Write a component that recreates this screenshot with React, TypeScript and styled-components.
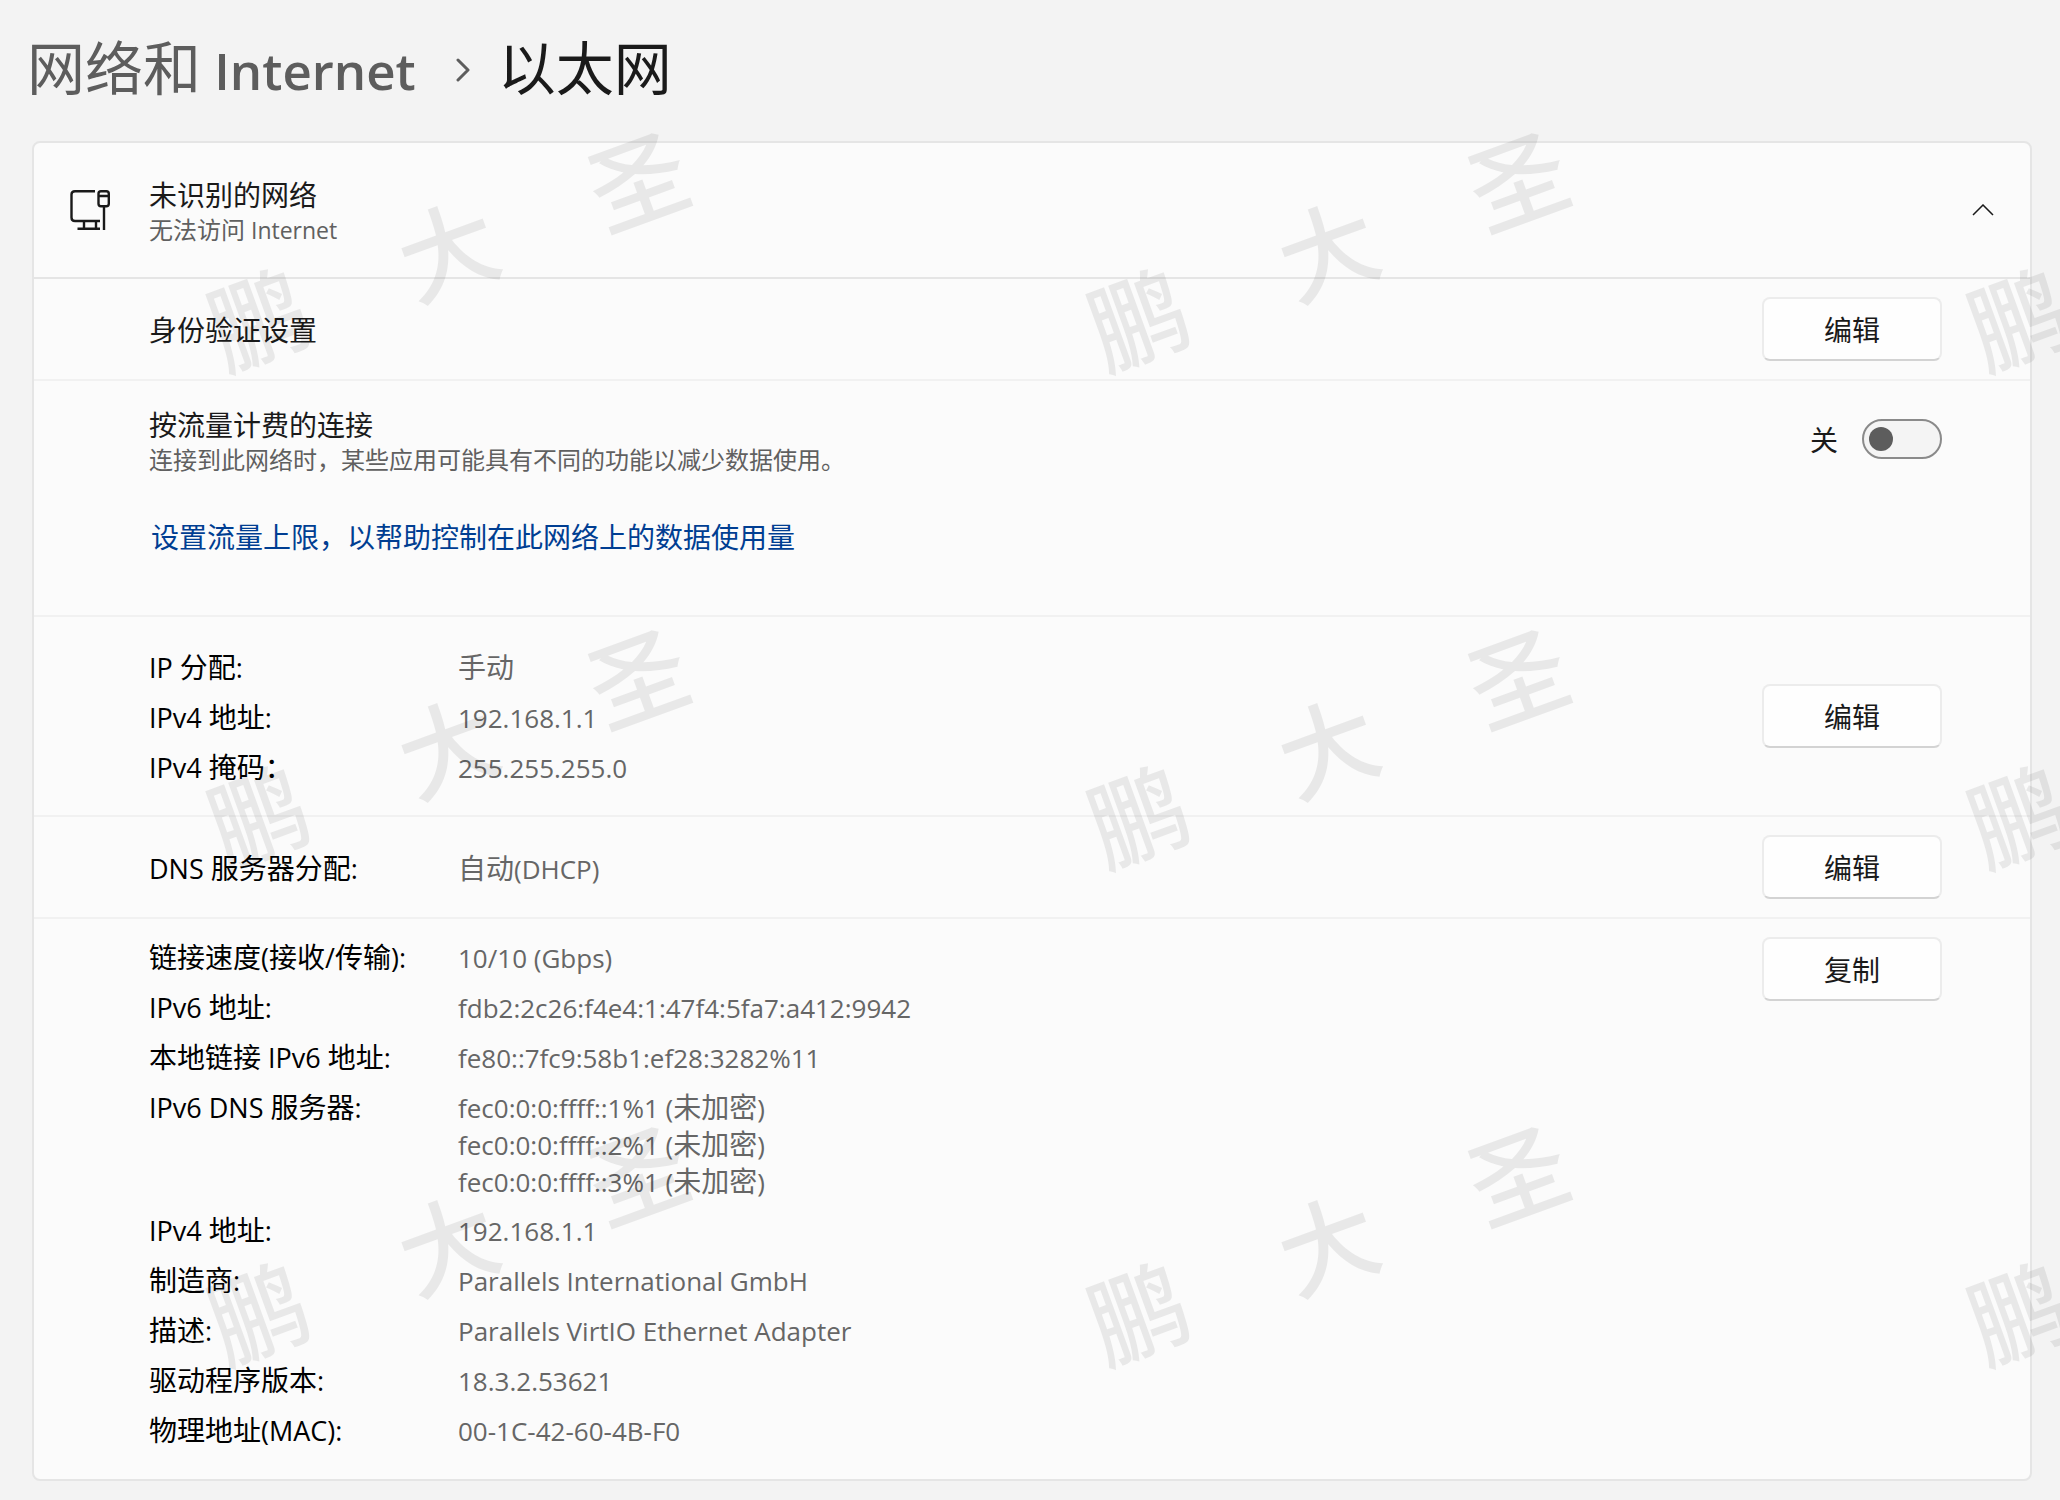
import React, { useState } from "react";
import styled, { createGlobalStyle } from "styled-components";

const GlobalStyle = createGlobalStyle`
  *, *::before, *::after { box-sizing: border-box; }
  html, body { margin: 0; background: #f3f3f3; }
  body {
    font-family: "Noto Sans CJK SC", sans-serif;
    font-size: 28px;
    line-height: 38px;
    color: #1a1a1a;
  }
  h1, h2, h3, p, dl, dd, dt { margin: 0; font: inherit; }
`;

const Page = styled.div`
  position: relative;
  min-height: 100vh;
  padding: 27px 28px 19px 32px;
  overflow: hidden;
`;

const LatinRun = styled.span`
  font-family: "Open Sans", sans-serif;
  font-size: 26px;
  line-height: 1;
`;

function Mixed({ text }: { text: string }) {
  return (
    <>
      {text.split(/([ -~]+)/).map((part, i) =>
        i % 2 ? <LatinRun key={i}>{part}</LatinRun> : part
      )}
    </>
  );
}

const Breadcrumb = styled.nav`
  display: flex;
  align-items: center;
  height: 76px;
  margin-bottom: 38px;
  font-size: 58px;
  line-height: 76px;
`;

const CrumbLink = styled.a`
  margin-left: -5px;
  color: #5d5d5d;
  text-decoration: none;
  white-space: nowrap;

  ${LatinRun} {
    font-size: 51px;
    font-weight: 600;
  }
`;

const CrumbArrow = styled.svg`
  flex: none;
  width: 14px;
  height: 24px;
  margin: 10px 28px 0 40px;
`;

const Card = styled.main`
  border: 2px solid #e5e5e5;
  border-radius: 8px;
  background: #fbfbfb;
`;

const Header = styled.header`
  display: flex;
  align-items: center;
  height: 134px;
  padding: 0 36px;
`;

const DeviceIcon = styled.svg`
  flex: none;
  width: 40px;
  height: 40px;
  margin-right: 39px;
`;

const Grow = styled.div`
  flex: 1;
  min-width: 0;
`;

const Note = styled.p`
  font-size: 24px;
  line-height: 32px;
  color: #606060;

  ${LatinRun} { font-size: 23px; }
`;

const Collapse = styled.button`
  display: flex;
  align-items: center;
  justify-content: flex-end;
  width: 40px;
  height: 40px;
  padding: 0;
  border: 0;
  background: none;
`;

const Section = styled.section<{ $first?: boolean; $pad?: string; $align?: string }>`
  display: flex;
  align-items: ${(p) => p.$align ?? "center"};
  padding: ${(p) => p.$pad ?? "18px"} 88px ${(p) => p.$pad ?? "18px"} 115px;
  border-top: 2px solid ${(p) => (p.$first ? "#e5e5e5" : "#f1f1f1")};
`;

const MeteredSection = styled(Section)`
  padding-top: 24px;
  padding-bottom: 60px;
`;

const DetailsSection = styled(Section)`
  padding-bottom: 31px;
`;

const ActionButton = styled.button`
  flex: none;
  width: 180px;
  height: 64px;
  padding: 0;
  border: 2px solid #ececec;
  border-bottom-color: #d3d3d3;
  border-radius: 8px;
  background: #fefefe;
  color: #1a1a1a;
  font: inherit;
`;

const LimitLink = styled.a`
  display: inline-block;
  margin: 42px 0 0 2px;
  color: #003e92;
  text-decoration: none;
`;

const SwitchLabel = styled.label`
  display: flex;
  align-items: center;
  gap: 24px;
  margin-top: 14px;
`;

const Switch = styled.input`
  appearance: none;
  display: flex;
  align-items: center;
  width: 80px;
  height: 40px;
  margin: 0;
  padding: 0 5px;
  border: 2px solid #8a8a8a;
  border-radius: 20px;
  background: #f4f4f4;

  &::before {
    content: "";
    width: 24px;
    height: 24px;
    border-radius: 50%;
    background: #5d5d5d;
  }
  &:checked { justify-content: flex-end; }
`;

const Properties = styled.dl`
  flex: 1;
  display: grid;
  grid-template-columns: 309px 1fr;
  row-gap: 12px;

  dt { color: #000; }
  dt ${LatinRun} { font-size: 27px; }
  dd { color: #666; }
`;

const ValueLine = styled.div`
  height: 37px;
`;

type Row = [label: string, ...values: string[]];

function PropertyList({ rows }: { rows: Row[] }) {
  return (
    <Properties>
      {rows.map(([label, ...values]) => (
        <React.Fragment key={label}>
          <dt><Mixed text={label} /></dt>
          <dd>
            {values.map((v) => (
              <ValueLine key={v}><Mixed text={v} /></ValueLine>
            ))}
          </dd>
        </React.Fragment>
      ))}
    </Properties>
  );
}

const ipRows: Row[] = [
  ["IP 分配:", "手动"],
  ["IPv4 地址:", "192.168.1.1"],
  ["IPv4 掩码：", "255.255.255.0"],
];

const dnsRows: Row[] = [["DNS 服务器分配:", "自动(DHCP)"]];

const detailRows: Row[] = [
  ["链接速度(接收/传输):", "10/10 (Gbps)"],
  ["IPv6 地址:", "fdb2:2c26:f4e4:1:47f4:5fa7:a412:9942"],
  ["本地链接 IPv6 地址:", "fe80::7fc9:58b1:ef28:3282%11"],
  [
    "IPv6 DNS 服务器:",
    "fec0:0:0:ffff::1%1 (未加密)",
    "fec0:0:0:ffff::2%1 (未加密)",
    "fec0:0:0:ffff::3%1 (未加密)",
  ],
  ["IPv4 地址:", "192.168.1.1"],
  ["制造商:", "Parallels International GmbH"],
  ["描述:", "Parallels VirtIO Ethernet Adapter"],
  ["驱动程序版本:", "18.3.2.53621"],
  ["物理地址(MAC):", "00-1C-42-60-4B-F0"],
];

/* The watermark lies over the whole page and repeats on a fixed tile. */
const WatermarkLayer = styled.div`
  position: absolute;
  inset: -4px 0 0 0;
  display: grid;
  grid-template-columns: repeat(3, 880px);
  grid-auto-rows: 497px;
  padding-left: 6px;
  overflow: hidden;
  pointer-events: none;
`;

const WatermarkTile = styled.div`
  display: flex;
  align-items: center;
  justify-content: center;
  gap: 104px;
  transform: rotate(-20deg);
  font-size: 98px;
  font-weight: 500;
  line-height: 98px;
  color: rgba(0, 0, 0, 0.075);
`;

export default function App() {
  const [metered, setMetered] = useState(false);
  return (
    <Page lang="zh-CN">
      <GlobalStyle />
      <Breadcrumb>
        <CrumbLink href="#network"><Mixed text="网络和 Internet" /></CrumbLink>
        <CrumbArrow viewBox="0 0 14 24" fill="none" stroke="#5d5d5d" strokeWidth="3" aria-hidden="true">
          <path d="M2 2 L12 12 L2 22" strokeLinecap="round" strokeLinejoin="round" />
        </CrumbArrow>
        <h1>以太网</h1>
      </Breadcrumb>

      <Card>
        <Header>
          <DeviceIcon viewBox="0 0 40 40" fill="none" stroke="#1a1a1a" strokeWidth="2.400" aria-hidden="true">
            <path d="M25 1.200H5Q1.500 1.200 1.500 4.500V27.500Q1.500 31 5 31H30M14 31V39M26 31V39M7.500 38.800H30" />
            <rect x="28.500" y="1.200" width="10.300" height="15" rx="2.500" />
            <path d="M28.500 6H38.800M34 16V40" />
          </DeviceIcon>
          <Grow>
            <h2>未识别的网络</h2>
            <Note><Mixed text="无法访问 Internet" /></Note>
          </Grow>
          <Collapse type="button" aria-label="折叠">
            <svg width="22" height="12" viewBox="0 0 22 12" fill="none" stroke="#1a1a1a" strokeWidth="1.500">
              <path d="M1 11L11 1L21 11" />
            </svg>
          </Collapse>
        </Header>

        <Section $first>
          <Grow><h3>身份验证设置</h3></Grow>
          <ActionButton type="button">编辑</ActionButton>
        </Section>

        <MeteredSection $align="flex-start">
          <Grow>
            <h3>按流量计费的连接</h3>
            <Note>连接到此网络时，某些应用可能具有不同的功能以减少数据使用。</Note>
            <LimitLink href="#limit">设置流量上限，以帮助控制在此网络上的数据使用量</LimitLink>
          </Grow>
          <SwitchLabel>
            {metered ? "开" : "关"}
            <Switch
              type="checkbox"
              role="switch"
              checked={metered}
              onChange={(e) => setMetered(e.target.checked)}
            />
          </SwitchLabel>
        </MeteredSection>

        <Section $pad="30px">
          <PropertyList rows={ipRows} />
          <ActionButton type="button">编辑</ActionButton>
        </Section>

        <Section>
          <PropertyList rows={dnsRows} />
          <ActionButton type="button">编辑</ActionButton>
        </Section>

        <DetailsSection $align="flex-start">
          <PropertyList rows={detailRows} />
          <ActionButton type="button">复制</ActionButton>
        </DetailsSection>
      </Card>

      <WatermarkLayer aria-hidden="true">
        {Array.from({ length: 9 }, (_, i) => (
          <WatermarkTile key={i}>
            <span>鹏</span>
            <span>大</span>
            <span>圣</span>
          </WatermarkTile>
        ))}
      </WatermarkLayer>
    </Page>
  );
}
